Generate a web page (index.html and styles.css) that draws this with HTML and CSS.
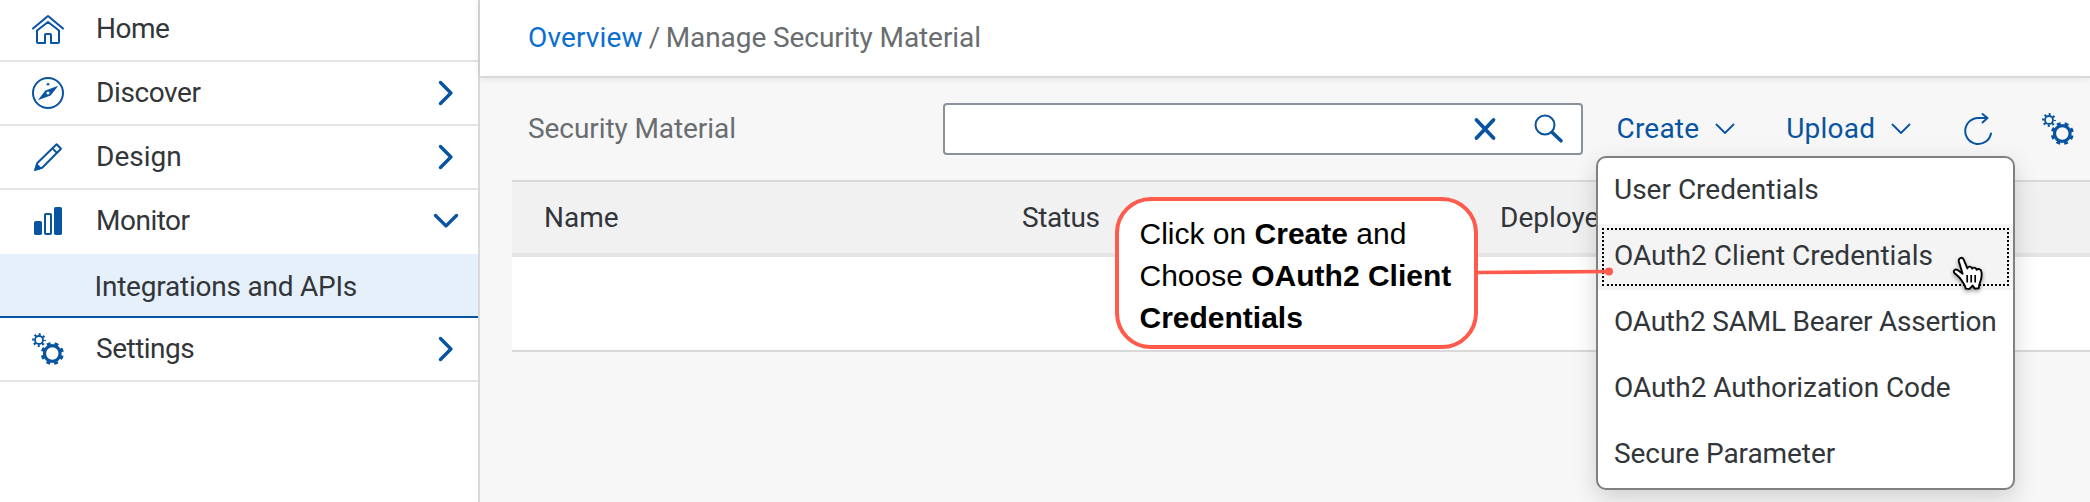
FILE: index.html
```html
<!DOCTYPE html>
<html lang="en">
<head>
<meta charset="utf-8">
<title>Manage Security Material</title>
<link rel="stylesheet" href="styles.css">
</head>
<body>
<svg class="defs" aria-hidden="true">
  <symbol id="gears" viewBox="0 0 32 32">
    <g fill="none" stroke="currentColor">
      <circle cx="20.3" cy="20.5" r="7.800" stroke-width="3.200"/>
      <circle cx="20.3" cy="20.5" r="10" stroke-width="3" stroke-dasharray="3.900 3.954" stroke-dashoffset="-2"/>
      <circle cx="7" cy="7" r="4" stroke-width="1.800"/>
      <circle cx="7" cy="7" r="5.700" stroke-width="2.400" stroke-dasharray="2 2.477" stroke-dashoffset="1"/>
    </g>
  </symbol>
</svg>
<div class="app">
  <nav class="sidebar">
    <a class="row"><svg class="icon" viewBox="0 0 32 32"><g fill="none" stroke="currentColor" stroke-width="2" stroke-linecap="round" stroke-linejoin="round"><path d="M1 15.6 16 3l15 12.600"/><path d="M5 17.500V29a1 1 0 0 0 1 1h7v-8a1 1 0 0 1 1-1h4a1 1 0 0 1 1 1v8h7a1 1 0 0 0 1-1V17.500L16 9z"/></g></svg><span class="label tight-3">Home</span></a>
    <a class="row"><svg class="icon" viewBox="0 0 32 32"><circle cx="16" cy="16" r="15" fill="none" stroke="currentColor" stroke-width="2"/><path fill="currentColor" fill-rule="evenodd" d="M26.300 8.700 18.600 18.500 5.800 23.300 13.400 13.500zM16 14.500a1.500 1.500 0 1 0 0 3 1.500 1.500 0 0 0 0-3zM16 5.300l1.900 2.900h-3.800z"/></svg><span class="label tight-2">Discover</span><svg class="arrow" viewBox="0 0 16 26"><path d="M2.500 2.500 12.900 13 2.500 23.500"/></svg></a>
    <a class="row"><svg class="icon" viewBox="0 0 32 32"><g fill="none" stroke="currentColor" stroke-width="2" stroke-linejoin="round"><path d="M24.600 3.200 29 7.700 10.200 26.800 3.200 28.900 5.300 22z"/><path d="M20.500 7.400l4.400 4.500"/></g><path fill="currentColor" d="M4.800 22.300l5.300 5.300L2 30z"/></svg><span class="label">Design</span><svg class="arrow" viewBox="0 0 16 26"><path d="M2.500 2.500 12.900 13 2.500 23.500"/></svg></a>
    <a class="row"><svg class="icon" viewBox="0 0 32 32"><g fill="currentColor"><rect x="2" y="16" width="8" height="14" rx="1.800"/><rect x="22" y="2" width="8" height="28" rx="1.800"/></g><rect x="13" y="9" width="6" height="20" rx="1" fill="none" stroke="currentColor" stroke-width="2"/></svg><span class="label tight-3">Monitor</span><svg class="arrow arrow-down" viewBox="0 0 26 16"><path d="M2.500 2.500 13 12.900 23.500 2.500"/></svg></a>
    <a class="row sub"><span class="label tight-1">Integrations and APIs</span></a>
    <a class="row"><svg class="icon"><use href="#gears"/></svg><span class="label tight-3">Settings</span><svg class="arrow" viewBox="0 0 16 26"><path d="M2.500 2.500 12.900 13 2.500 23.500"/></svg></a>
  </nav>
  <main class="content">
    <header class="crumbs"><a class="link">Overview</a><span class="slash">/</span><span class="tight-0">Manage Security Material</span></header>
    <div class="toolbar">
      <h1 class="title tight-0">Security Material</h1>
      <div class="search">
        <svg class="clear" viewBox="0 0 24 24"><path d="M3.500 3l17 18M20.500 3l-17 18" stroke="currentColor" stroke-width="3.800" stroke-linecap="round"/></svg>
        <svg class="lens" viewBox="0 0 30 30"><circle cx="11" cy="11" r="9.500" fill="none" stroke="currentColor" stroke-width="2"/><path d="M18 18.300 27 26.800" stroke="currentColor" stroke-width="3.600" stroke-linecap="round"/></svg>
      </div>
      <a class="action create">Create<svg class="chev" viewBox="0 0 20 12"><path d="M1.500 1.500 10 10l8.500-8.500"/></svg></a>
      <a class="action upload">Upload<svg class="chev" viewBox="0 0 20 12"><path d="M1.500 1.500 10 10l8.500-8.500"/></svg></a>
      <svg class="refresh" viewBox="0 0 30 34"><g fill="none" stroke="currentColor" stroke-width="2" stroke-linecap="round" stroke-linejoin="round"><path d="M28 21.500A13 13 0 1 1 15 6h9"/><path d="M19.500 2l5 4-5 4.500"/></g></svg>
      <svg class="gear"><use href="#gears"/></svg>
    </div>
    <section class="table">
      <div class="thead"><span>Name</span><span class="tight-2">Status</span><span>Deployed</span></div>
      <div class="tbody"></div>
    </section>
  </main>
</div>
<ul class="menu">
  <li class="item">User Credentials</li>
  <li class="item active">OAuth2 Client Credentials</li>
  <li class="item tight-1">OAuth2 SAML Bearer Assertion</li>
  <li class="item tight-0">OAuth2 Authorization Code</li>
  <li class="item tight-0">Secure Parameter</li>
</ul>
<svg class="pointer-line" viewBox="0 0 140 12"><path d="M0 6.500 133 5.500" stroke="#ff5a4b" stroke-width="3.700"/><circle cx="131" cy="5.500" r="4" fill="#ff5a4b"/></svg>
<div class="callout">Click on <b>Create</b> and<br>Choose <b>OAuth2 Client</b><br><b>Credentials</b></div>
<svg class="cursor" viewBox="0 0 36 40"><path d="M11 26C8 21 5.500 20 3.600 18.200c-2-2.500.6-4.600 3-3.200L11.600 18.800 7.900 6.600C7 3 11.200 1.300 12.700 4.600l3.700 8.800c.6-2.600 4.300-2.300 4.700.3.900-1.700 4-1.400 4.500 1 1.300-1.200 4.200-.7 4.700 1.700 1.200 4.800.1 7.800-1.500 11.600-.8 1.900-.9 3.500-1 5.300l-4 .3-2.200-3-3.100 3.300-3.800-.3c-.2-3.200-2.400-5.200-3.700-7.600z" fill="#fff" stroke="#000" stroke-width="1.900" stroke-linejoin="round"/><path d="M16.200 20v7.500M20.200 20v7.500M24.200 20v7.500" stroke="#000" stroke-width="1.700"/></svg>
</body>
</html>
```
FILE: styles.css
```css
* { box-sizing: border-box; }
body {
  margin: 0;
  width: 2090px;
  height: 502px;
  overflow: hidden;
  position: relative;
  background: #f7f7f7;
  color: #32363a;
  font: 28px/32px Roboto, "Liberation Sans", sans-serif;
  white-space: nowrap;
}
svg { display: block; flex: none; }
.defs { position: absolute; width: 0; height: 0; }
.tight-0 { letter-spacing: -0.08px; }
.tight-1 { letter-spacing: -0.22px; }
.tight-2 { letter-spacing: -0.4px; }
.tight-3 { letter-spacing: -0.5px; }

.app { display: flex; height: 502px; }
.sidebar {
  width: 480px;
  flex: none;
  background: #fff;
  border-right: 2px solid #d9d9d9;
}
.row {
  display: flex;
  align-items: center;
  height: 64px;
  padding: 0 24px 0 32px;
  border-bottom: 2px solid #e4e4e4;
}
.row:first-child { height: 62px; padding-bottom: 2px; }
.row:nth-child(4) { border-bottom-color: #fff; }
.row.sub {
  padding: 4px 0 0 94.500px;
  background: #e5f0fa;
  border-bottom-color: #0854a0;
}
.icon { width: 32px; height: 32px; color: #0854a0; }
.row .icon + .label { margin-left: 32px; }
.label { flex: 1; }
.arrow {
  width: 16px;
  height: 26px;
  fill: none;
  stroke: #0854a0;
  stroke-width: 3.4;
  stroke-linecap: round;
  stroke-linejoin: round;
}
.arrow-down { width: 26px; height: 16px; margin-right: -5px; }

.content { flex: 1; min-width: 0; }
.crumbs {
  display: flex;
  height: 78px;
  padding: 22px 48px 0;
  background: #fff;
  border-bottom: 2px solid #d9d9d9;
  box-shadow: 0 0 8px rgba(0, 0, 0, 0.1);
  color: #6a6d70;
}
.link { color: #0a6ed1; letter-spacing: 0.15px; }
.slash { width: 10px; margin: 0 7px 0 6px; }
.toolbar {
  display: flex;
  align-items: center;
  height: 102px;
  padding: 0 16px 0 48px;
  color: #0854a0;
}
.title {
  width: 415px;
  margin: 0;
  color: #6a6d70;
  font-size: 28px;
  font-weight: 400;
}
.search {
  display: flex;
  align-items: center;
  justify-content: flex-end;
  width: 640px;
  height: 52px;
  padding-right: 17px;
  background: #fff;
  border: 2px solid #89919a;
  border-radius: 4px;
}
.clear { width: 24px; height: 24px; margin-right: 37px; }
.lens { width: 30px; height: 30px; }
.action { display: flex; align-items: center; letter-spacing: 0.2px; }
.create { margin-left: 33.500px; }
.upload { margin-left: 51px; }
.chev {
  width: 20px;
  height: 12px;
  margin-left: 16px;
  fill: none;
  stroke: currentColor;
  stroke-width: 1.8;
  stroke-linecap: round;
  stroke-linejoin: round;
}
.refresh { width: 30px; height: 34px; margin-left: auto; }
.gear { width: 32px; height: 32px; margin-left: 49px; }
.table { margin-left: 32px; border-bottom: 2px solid #d9d9d9; }
.thead {
  display: grid;
  grid-template-columns: 478px 478px 1fr;
  align-items: center;
  height: 77px;
  padding-left: 32px;
  background: #f1f1f1;
  border-top: 2px solid #d9d9d9;
  border-bottom: 4px solid #e4e4e4;
}
.tbody { height: 93px; background: #fff; }

.menu {
  position: absolute;
  left: 1596px;
  top: 156px;
  width: 419px;
  height: 334px;
  margin: 0;
  padding: 0;
  list-style: none;
  background: #fff;
  border: 2px solid #808080;
  border-radius: 10px;
  box-shadow: 0 8px 24px rgba(0, 0, 0, 0.16);
}
.item {
  display: flex;
  align-items: center;
  height: 66px;
  padding: 0 0 2px 16px;
}
.item.active {
  background: #f4f4f4;
  outline: 2px dotted #000;
  outline-offset: -6px;
}
.callout {
  position: absolute;
  left: 1115px;
  top: 197px;
  width: 363px;
  height: 152px;
  padding: 12px 20.500px;
  background: #fff;
  border: 4px solid #ff5a4b;
  border-radius: 36px;
  color: #000;
  font: 30px/42px "Liberation Sans", Arial, sans-serif;
}
.pointer-line {
  position: absolute;
  left: 1478px;
  top: 266px;
  width: 140px;
  height: 12px;
}
.cursor {
  position: absolute;
  left: 1951px;
  top: 255px;
  width: 36px;
  height: 40px;
  filter: drop-shadow(0 2px 2px rgba(0, 0, 0, 0.4));
}
```
